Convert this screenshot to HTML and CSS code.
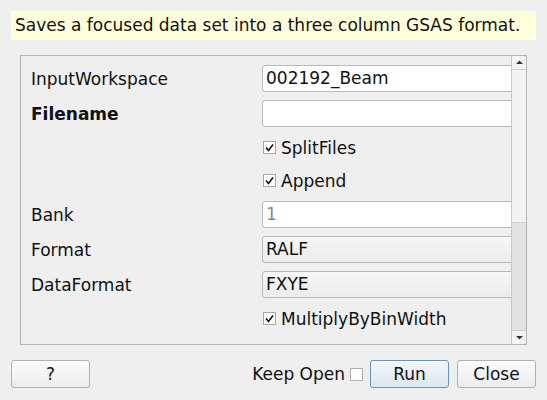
FILE: index.html
```html
<!DOCTYPE html>
<html>
<head>
<meta charset="utf-8">
<link rel="stylesheet" href="styles.css">
</head>
<body>
<div class="desc">Saves a focused data set into a three column GSAS format.</div>
<div class="frame">
  <div class="content">
    <div class="row">
      <span class="label">InputWorkspace</span>
      <div class="field"><span class="input">002192_Beam</span></div>
    </div>
    <div class="row">
      <span class="label bold">Filename</span>
      <div class="field"><span class="input"></span></div>
    </div>
    <div class="row short">
      <span class="label"></span>
      <div class="field"><span class="check"><span class="box"><svg viewBox="0 0 13 13" width="13" height="13"><path d="M3 6.5 L5.5 9.5 L10 3.5" fill="none" stroke="#111" stroke-width="1.6"/></svg></span>SplitFiles</span></div>
    </div>
    <div class="row short">
      <span class="label"></span>
      <div class="field"><span class="check"><span class="box"><svg viewBox="0 0 13 13" width="13" height="13"><path d="M3 6.5 L5.5 9.5 L10 3.5" fill="none" stroke="#111" stroke-width="1.6"/></svg></span>Append</span></div>
    </div>
    <div class="row">
      <span class="label">Bank</span>
      <div class="field"><span class="input placeholder">1</span></div>
    </div>
    <div class="row">
      <span class="label">Format</span>
      <div class="field"><span class="input combo">RALF</span></div>
    </div>
    <div class="row">
      <span class="label">DataFormat</span>
      <div class="field"><span class="input combo">FXYE</span></div>
    </div>
    <div class="row short">
      <span class="label"></span>
      <div class="field"><span class="check"><span class="box"><svg viewBox="0 0 13 13" width="13" height="13"><path d="M3 6.5 L5.5 9.5 L10 3.5" fill="none" stroke="#111" stroke-width="1.6"/></svg></span>MultiplyByBinWidth</span></div>
    </div>
  </div>
  <div class="scrollbar">
    <div class="arrow up"><svg viewBox="0 0 13 13" width="13" height="13"><path d="M3 8 L6.5 4.5 L10 8 Z" fill="#333"/></svg></div>
    <div class="handle"></div>
    <div class="trough"></div>
    <div class="arrow down"><svg viewBox="0 0 13 13" width="13" height="13"><path d="M3 5 L6.5 8.5 L10 5 Z" fill="#333"/></svg></div>
  </div>
</div>
<div class="buttons">
  <button class="btn">?</button>
  <div class="spacer"></div>
  <span class="keep">Keep Open</span>
  <span class="keepbox"></span>
  <button class="btn run">Run</button>
  <button class="btn">Close</button>
</div>
</body>
</html>
```
FILE: styles.css
```css
html, body {
  margin: 0;
  padding: 0;
  background: #efefef;
  font-family: "DejaVu Sans", sans-serif;
  font-size: 17px;
  color: #111;
}
body {
  width: 547px;
  height: 400px;
  overflow: hidden;
}
.desc {
  margin: 11px 0 0 11px;
  width: 521px;
  height: 29px;
  line-height: 29px;
  padding-left: 4px;
  background: #ffffdc;
  white-space: nowrap;
}
.frame {
  margin: 15px 0 0 20px;
  width: 505px;
  height: 288px;
  border: 1px solid #b4b4b4;
  display: flex;
}
.content {
  flex: 1;
  overflow: hidden;
  padding: 9px 0 0 10px;
  display: flex;
  flex-direction: column;
  gap: 8px;
}
.row {
  display: grid;
  grid-template-columns: 231px 300px;
  height: 27px;
  align-items: center;
}
.row.short {
  height: 25px;
}
.label {
  white-space: nowrap;
}
.bold {
  font-weight: bold;
}
.field {
  height: 100%;
  display: flex;
  align-items: center;
}
.input {
  box-sizing: border-box;
  width: 100%;
  height: 27px;
  line-height: 25px;
  border: 1px solid #b9b9b9;
  border-radius: 3px;
  background: #fff;
  padding-left: 3px;
}
.input.placeholder {
  color: #8a8a8a;
}
.input.combo {
  background: linear-gradient(#f6f6f6, #ececec);
}
.check {
  display: flex;
  align-items: center;
  gap: 5px;
  padding-left: 1px;
  white-space: nowrap;
}
.box {
  box-sizing: border-box;
  width: 13px;
  height: 13px;
  border: 1px solid #a8a8a8;
  background: #fff;
  display: flex;
  align-items: center;
  justify-content: center;
}
.box svg {
  flex: none;
}
.scrollbar {
  width: 14px;
  border-left: 1px solid #c8c8c8;
  display: flex;
  flex-direction: column;
  background: #efefef;
}
.arrow {
  height: 13px;
  display: flex;
  align-items: center;
  justify-content: center;
  background: #f2f2f2;
}
.arrow.up {
  border-bottom: 1px solid #cfcfcf;
}
.arrow.down {
  border-top: 1px solid #cfcfcf;
}
.handle {
  height: 152px;
  background: #f3f3f3;
  border-bottom: 1px solid #cfcfcf;
}
.trough {
  flex: 1;
  background: #e2e2e2;
}
.buttons {
  display: flex;
  align-items: center;
  margin: 15px 0 0 11px;
  width: 525px;
  height: 28px;
}
.spacer {
  flex: 1;
}
.btn {
  box-sizing: border-box;
  width: 79px;
  height: 28px;
  font-family: "DejaVu Sans", sans-serif;
  font-size: 17px;
  color: #111;
  border: 1px solid #b0b0b0;
  border-radius: 3px;
  background: linear-gradient(#fbfbfb, #ececec);
  padding: 0;
}
.btn.run {
  border-color: #6a93bb;
  background: linear-gradient(#f3f7fb, #dde6ef);
  margin-right: 8px;
}
.keep {
  white-space: nowrap;
  margin-right: 5px;
}
.keepbox {
  box-sizing: border-box;
  width: 13px;
  height: 13px;
  border: 1px solid #b0b0b0;
  background: #fff;
  margin-right: 7px;
}
```
